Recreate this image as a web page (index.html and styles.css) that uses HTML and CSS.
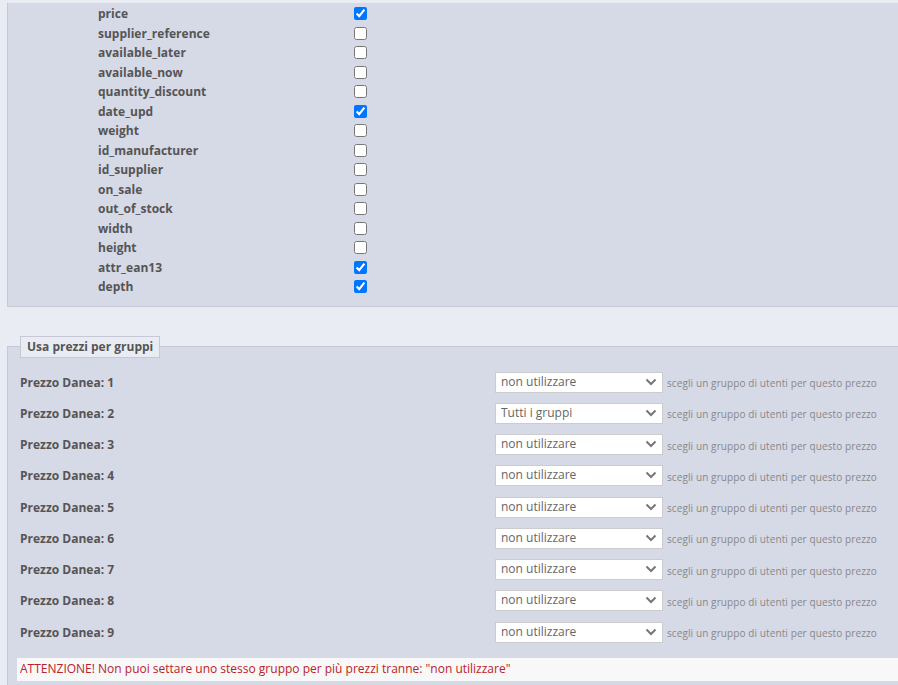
FILE: index.html
```html
<!DOCTYPE html>
<html lang="it">

<head>
    <meta charset="UTF-8">
    <meta name="viewport" content="width=device-width, initial-scale=1.0">
    <title>Danea - campi</title>
    <link rel="stylesheet" href="styles.css">
</head>

<body>
    <div class="fields-panel">
        <div class="field-row"><span class="field-name">price</span><input type="checkbox" checked></div>
        <div class="field-row"><span class="field-name">supplier_reference</span><input type="checkbox"></div>
        <div class="field-row"><span class="field-name">available_later</span><input type="checkbox"></div>
        <div class="field-row"><span class="field-name">available_now</span><input type="checkbox"></div>
        <div class="field-row"><span class="field-name">quantity_discount</span><input type="checkbox"></div>
        <div class="field-row"><span class="field-name">date_upd</span><input type="checkbox" checked></div>
        <div class="field-row"><span class="field-name">weight</span><input type="checkbox"></div>
        <div class="field-row"><span class="field-name">id_manufacturer</span><input type="checkbox"></div>
        <div class="field-row"><span class="field-name">id_supplier</span><input type="checkbox"></div>
        <div class="field-row"><span class="field-name">on_sale</span><input type="checkbox"></div>
        <div class="field-row"><span class="field-name">out_of_stock</span><input type="checkbox"></div>
        <div class="field-row"><span class="field-name">width</span><input type="checkbox"></div>
        <div class="field-row"><span class="field-name">height</span><input type="checkbox"></div>
        <div class="field-row"><span class="field-name">attr_ean13</span><input type="checkbox" checked></div>
        <div class="field-row"><span class="field-name">depth</span><input type="checkbox" checked></div>
    </div>

    <fieldset class="groups">
        <legend>Usa prezzi per gruppi</legend>

        <div id="price-rows"></div>

        <div class="warning">ATTENZIONE! Non puoi settare uno stesso gruppo per più prezzi tranne: "non utilizzare"</div>
    </fieldset>

    <script>
        const rows = document.getElementById('price-rows');
        for (let i = 1; i <= 9; i++) {
            const row = document.createElement('div');
            row.className = 'price-row';
            row.innerHTML =
                '<label>Prezzo Danea: ' + i + '</label>' +
                '<div class="select-wrap">' +
                '<select><option>non utilizzare</option><option' + (i === 2 ? ' selected' : '') + '>Tutti i gruppi</option></select>' +
                '<svg viewBox="0 0 12 8" width="12" height="8"><path d="M1.5 1.5 L6 6 L10.5 1.5" fill="none" stroke="#777" stroke-width="2"/></svg>' +
                '</div>' +
                '<span class="hint">scegli un gruppo di utenti per questo prezzo</span>';
            rows.appendChild(row);
        }
    </script>
</body>

</html>
```

FILE: styles.css
```css
html {
    overflow: hidden;
}

body {
    margin: 0;
    background-color: #e9ecf3;
    font-family: "Open Sans", "Liberation Sans", sans-serif;
    color: #555;
}

.fields-panel {
    margin: 3px 0 0 7px;
    padding: 1px 0 9px 90px;
    background-color: #d6d9e6;
    border-left: 1px solid #c6c9d5;
    border-bottom: 1px solid #c6c9d5;
}

.field-row {
    display: flex;
    align-items: center;
    height: 19.5px;
}

.field-name {
    width: 256px;
    font-size: 12px;
    font-weight: bold;
}

.field-row input {
    margin: 0;
    width: 13px;
    height: 13px;
}

.groups {
    margin: 29px 0 0 7px;
    padding: 9px 0 0 12px;
    min-width: 0;
    background-color: #d6d9e6;
    border: 1px solid #c6c9d5;
    border-right: none;
    border-bottom: none;
}

.groups legend {
    margin: 0;
    padding: 0 6px;
    height: 20px;
    line-height: 20px;
    font-size: 12px;
    font-weight: bold;
    background-color: #e9ecf3;
    border: 1px solid #c6c9d5;
}

.price-row {
    display: flex;
    align-items: center;
    height: 31.25px;
}

.price-row label {
    width: 475px;
    font-size: 12px;
    font-weight: bold;
}

.select-wrap {
    position: relative;
    width: 168px;
    height: 21px;
}

.select-wrap select {
    display: block;
    appearance: none;
    -webkit-appearance: none;
    width: 100%;
    height: 21px;
    margin: 0;
    padding: 0 0 2px 5px;
    border: 1px solid #ccc;
    border-radius: 0;
    background-color: #fff;
    font-family: "Open Sans", "Liberation Sans", sans-serif;
    font-size: 12px;
    color: #666;
}

.select-wrap svg {
    position: absolute;
    right: 6px;
    top: 6px;
    pointer-events: none;
}

.hint {
    margin: 2px 0 0 4px;
    font-size: 10px;
    letter-spacing: 0.1px;
    color: #888;
    white-space: nowrap;
}

.warning {
    margin: 10px 0 4px -3px;
    padding-left: 3px;
    height: 23px;
    line-height: 22px;
    font-size: 12px;
    color: #b8232a;
    background-color: #f8f8f8;
}
```
